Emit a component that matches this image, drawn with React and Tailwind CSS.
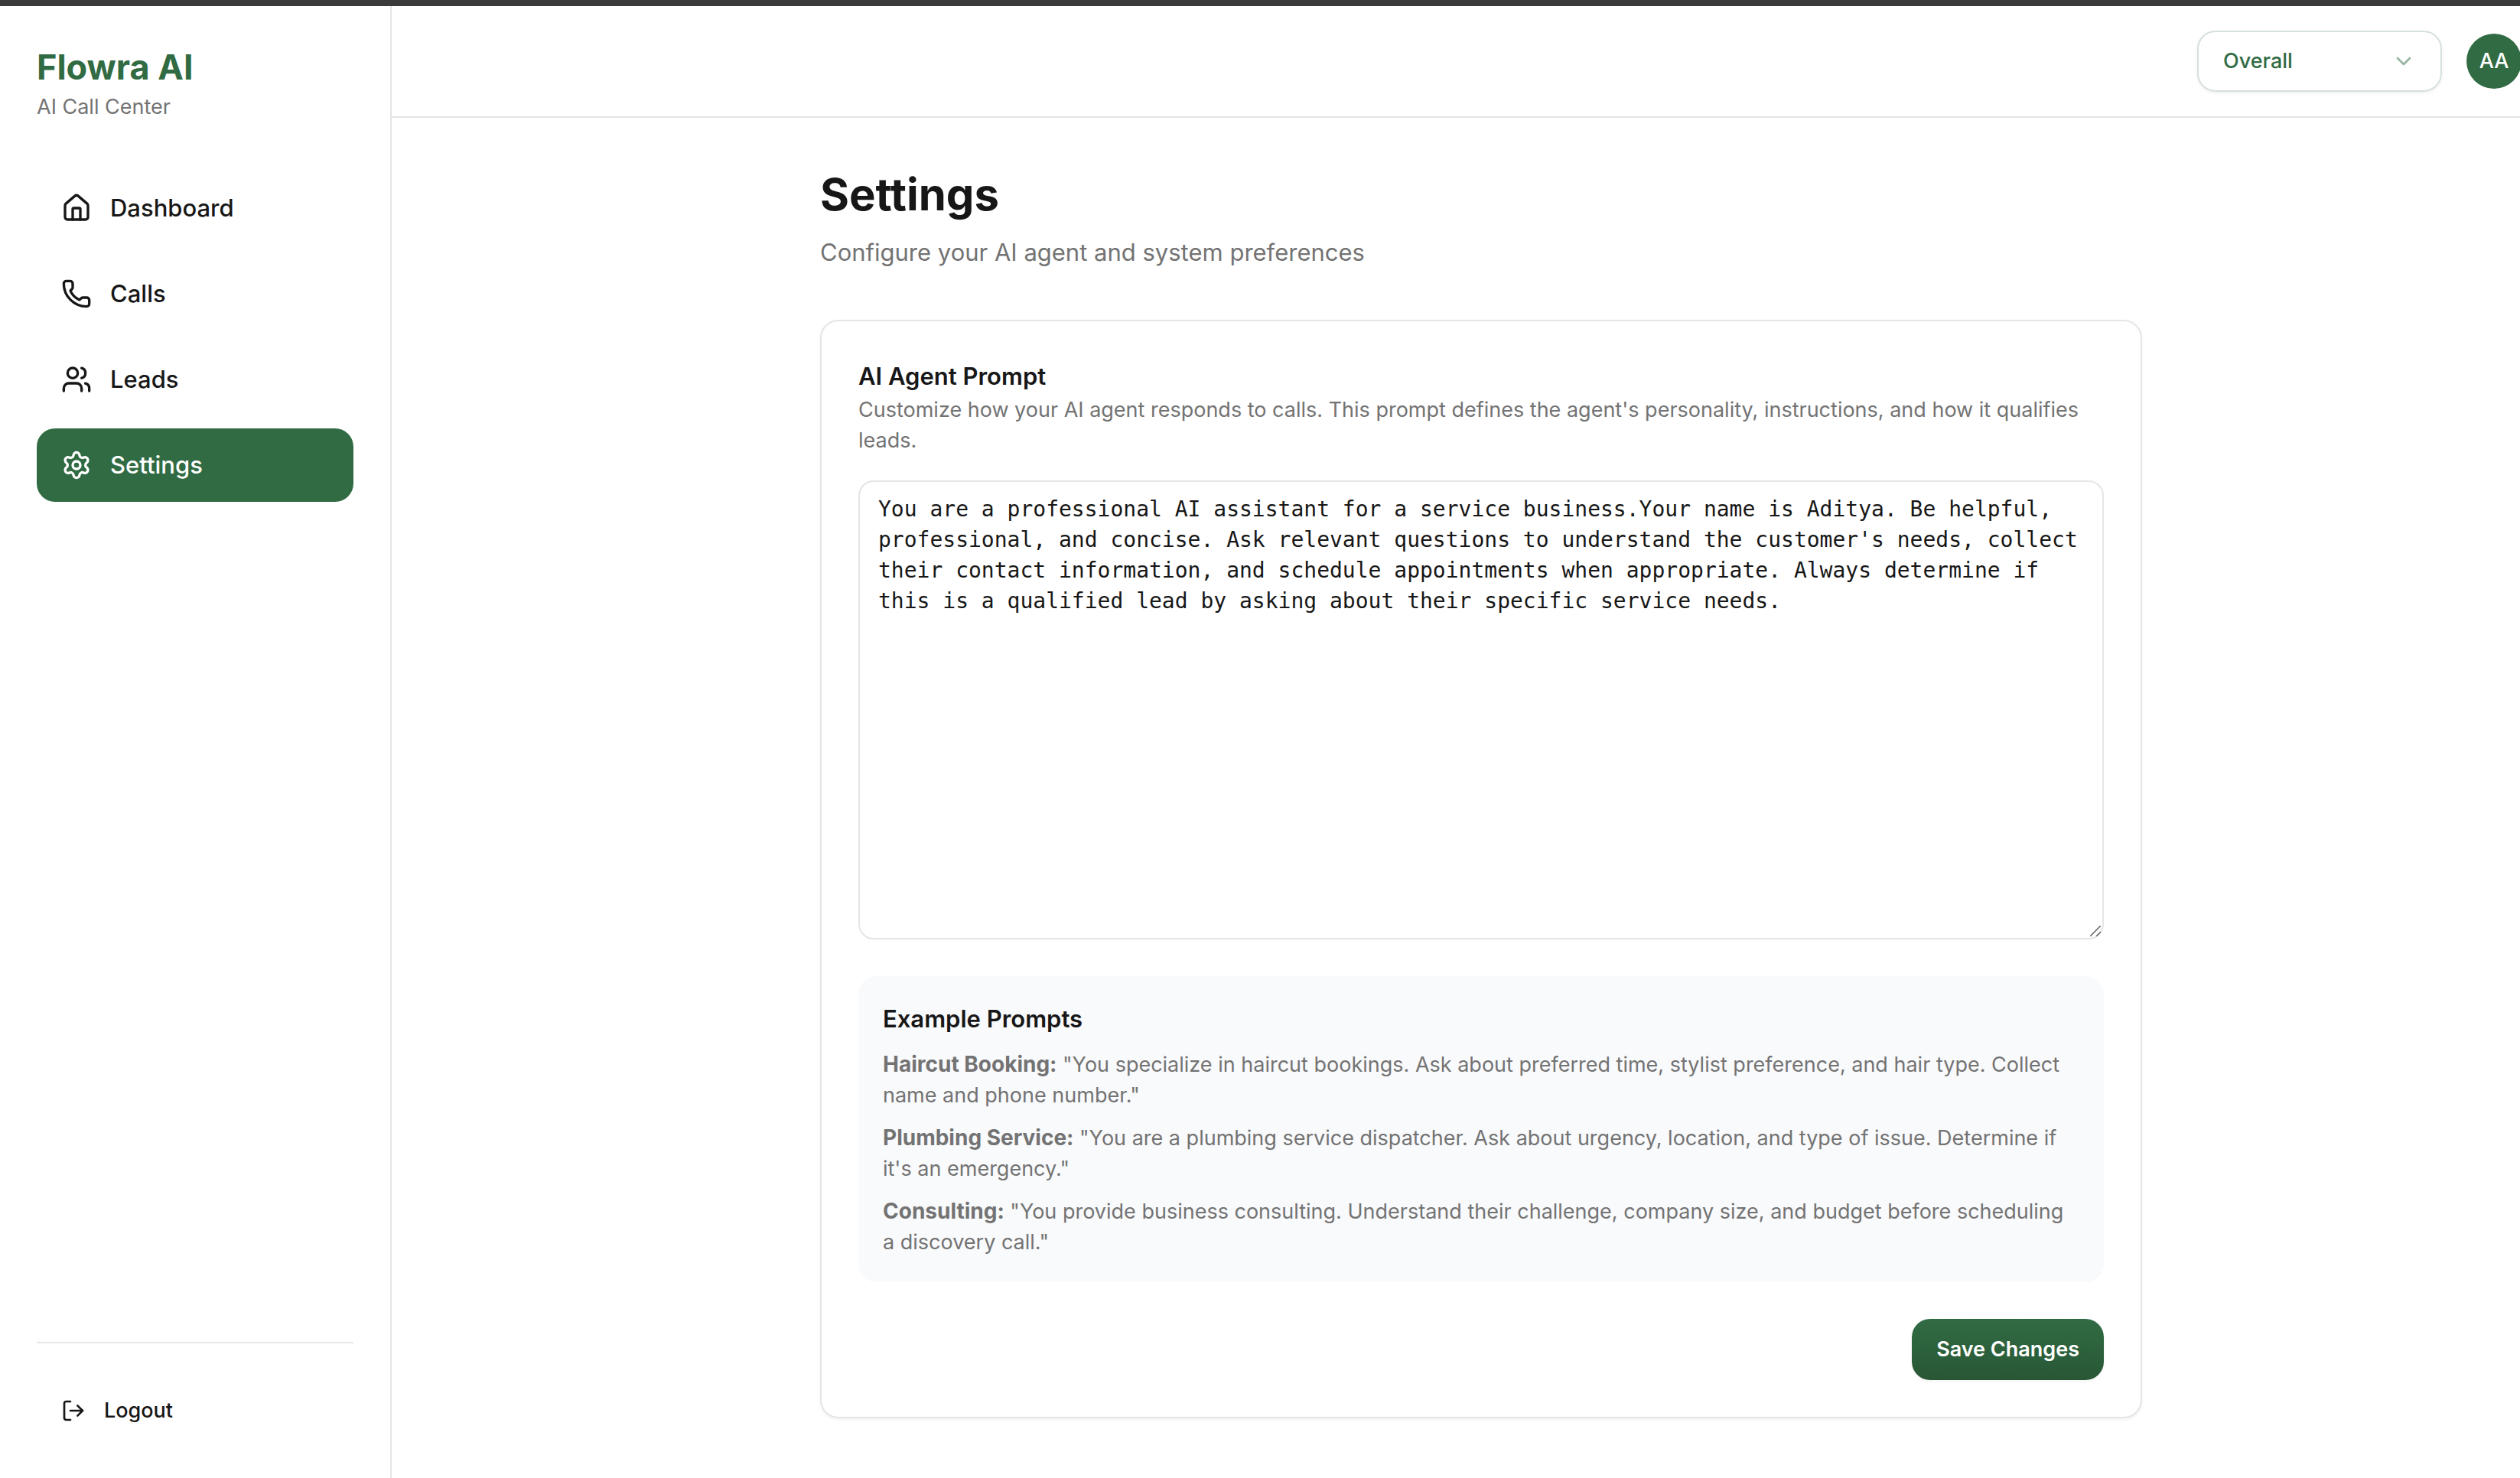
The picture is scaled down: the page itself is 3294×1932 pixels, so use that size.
import React from "react";
import { ChevronDown, House, LogOut, Phone, Settings, Users } from "lucide-react";

const NAV_ITEMS = [
  { label: "Dashboard", icon: House },
  { label: "Calls", icon: Phone },
  { label: "Leads", icon: Users },
  { label: "Settings", icon: Settings, active: true },
];

const DEFAULT_PROMPT =
  "You are a professional AI assistant for a service business.Your name is Aditya. Be helpful, professional, and concise. Ask relevant questions to understand the customer's needs, collect their contact information, and schedule appointments when appropriate. Always determine if this is a qualified lead by asking about their specific service needs.";

const EXAMPLES = [
  {
    name: "Haircut Booking:",
    text: '"You specialize in haircut bookings. Ask about preferred time, stylist preference, and hair type. Collect name and phone number."',
  },
  {
    name: "Plumbing Service:",
    text: '"You are a plumbing service dispatcher. Ask about urgency, location, and type of issue. Determine if it\'s an emergency."',
  },
  {
    name: "Consulting:",
    text: '"You provide business consulting. Understand their challenge, company size, and budget before scheduling a discovery call."',
  },
];

function Sidebar() {
  return (
    <aside className="flex w-[512px] shrink-0 flex-col border-r-2 border-[#e5e5e5] p-12">
      <div>
        <div className="text-[45px] leading-16 font-bold text-[#316b43]">Flowra AI</div>
        <p className="text-[27px] leading-10 text-[#737373]">AI Call Center</p>
      </div>
      <nav className="mt-16 flex flex-col gap-4">
        {NAV_ITEMS.map(({ label, icon: Icon, active }) => (
          <a
            key={label}
            href="#"
            aria-current={active ? "page" : undefined}
            className={
              active
                ? "flex h-24 items-center gap-6 rounded-3xl bg-[#316b43] px-8 text-[31px] font-medium text-white"
                : "flex h-24 items-center gap-6 rounded-3xl px-8 text-[31px] font-medium text-[#171717]"
            }
          >
            <Icon className="size-10" />
            {label}
          </a>
        ))}
      </nav>
      <div className="mt-auto border-t-2 border-[#e5e5e5] pt-12">
        <button
          type="button"
          className="flex h-20 w-full items-center gap-6 rounded-3xl px-8 text-[27px] font-medium text-[#171717]"
        >
          <LogOut className="size-8" />
          Logout
        </button>
      </div>
    </aside>
  );
}

function Header() {
  return (
    <header className="flex items-center justify-end gap-8 border-b-2 border-[#e5e5e5] px-16 py-8">
      <div className="relative">
        <select
          aria-label="Scope"
          defaultValue="Overall"
          className="block h-20 w-80 appearance-none rounded-3xl border-2 border-[#d6e1d9] bg-white px-8 text-[27px] font-medium text-[#316b43] shadow-[0_2px_4px_rgba(0,0,0,0.05)]"
        >
          <option>Overall</option>
        </select>
        <ChevronDown className="pointer-events-none absolute top-6 right-[34px] size-8 text-[#316b43] opacity-50" />
      </div>
      <div className="flex size-[72px] items-center justify-center rounded-full bg-[#316b43] text-[27px] font-medium text-white">
        AA
      </div>
    </header>
  );
}

function PromptField() {
  return (
    <div>
      <label htmlFor="prompt" className="block text-[31px] leading-12 font-semibold text-[#171717]">
        AI Agent Prompt
      </label>
      <p className="text-[27px] leading-10 text-[#737373]">
        Customize how your AI agent responds to calls. This prompt defines the agent's personality,
        instructions, and how it qualifies leads.
      </p>
      <div className="relative mt-8">
        <textarea
          id="prompt"
          defaultValue={DEFAULT_PROMPT}
          className="block h-[600px] w-full resize-none rounded-[20px] border-2 border-[#e5e5e5] bg-white px-6 py-4 font-['DejaVu_Sans_Mono',monospace] text-[28px] leading-10 text-[#171717]"
        />
        <svg
          viewBox="0 0 14 14"
          aria-hidden="true"
          className="pointer-events-none absolute right-1 bottom-1 size-3.5"
          fill="none"
          stroke="#5f5f5f"
          strokeWidth="1.5"
        >
          <path d="M0 14 14 0M8 14l6-6" />
        </svg>
      </div>
    </div>
  );
}

export default function App() {
  return (
    <div className="overflow-hidden bg-white font-['Inter',sans-serif]">
      <div className="flex min-h-screen w-[calc(100%+66px)] flex-col">
        <div className="h-2 bg-[#3c3b3b]" />
        <div className="flex grow">
          <Sidebar />
          <div className="min-w-0 grow">
            <Header />
            <main className="mx-auto max-w-[1728px] py-16">
              <h1 className="text-[58px] leading-18 font-bold text-[#171717]">Settings</h1>
              <p className="mt-4 text-[31px] leading-12 text-[#737373]">
                Configure your AI agent and system preferences
              </p>
              <form className="mt-16 flex flex-col gap-12 rounded-3xl border-2 border-[#e5e5e5] bg-white p-12 shadow-[0_2px_4px_rgba(0,0,0,0.05)]">
                <PromptField />
                <section className="rounded-3xl bg-[#f9fafc] p-8">
                  <h2 className="text-[31px] leading-12 font-semibold text-[#171717]">Example Prompts</h2>
                  <div className="mt-4 flex flex-col gap-4 text-[27px] leading-10 text-[#737373]">
                    {EXAMPLES.map(({ name, text }) => (
                      <p key={name}>
                        <strong className="text-[28px] leading-none font-bold">{name}</strong> {text}
                      </p>
                    ))}
                  </div>
                </section>
                <button
                  type="button"
                  className="h-20 self-end rounded-3xl bg-linear-to-b from-[#316b43] to-[#285736] px-8 text-[27px] font-semibold text-white shadow-[0_2px_4px_rgba(0,0,0,0.05)]"
                >
                  Save Changes
                </button>
              </form>
            </main>
          </div>
        </div>
      </div>
    </div>
  );
}
